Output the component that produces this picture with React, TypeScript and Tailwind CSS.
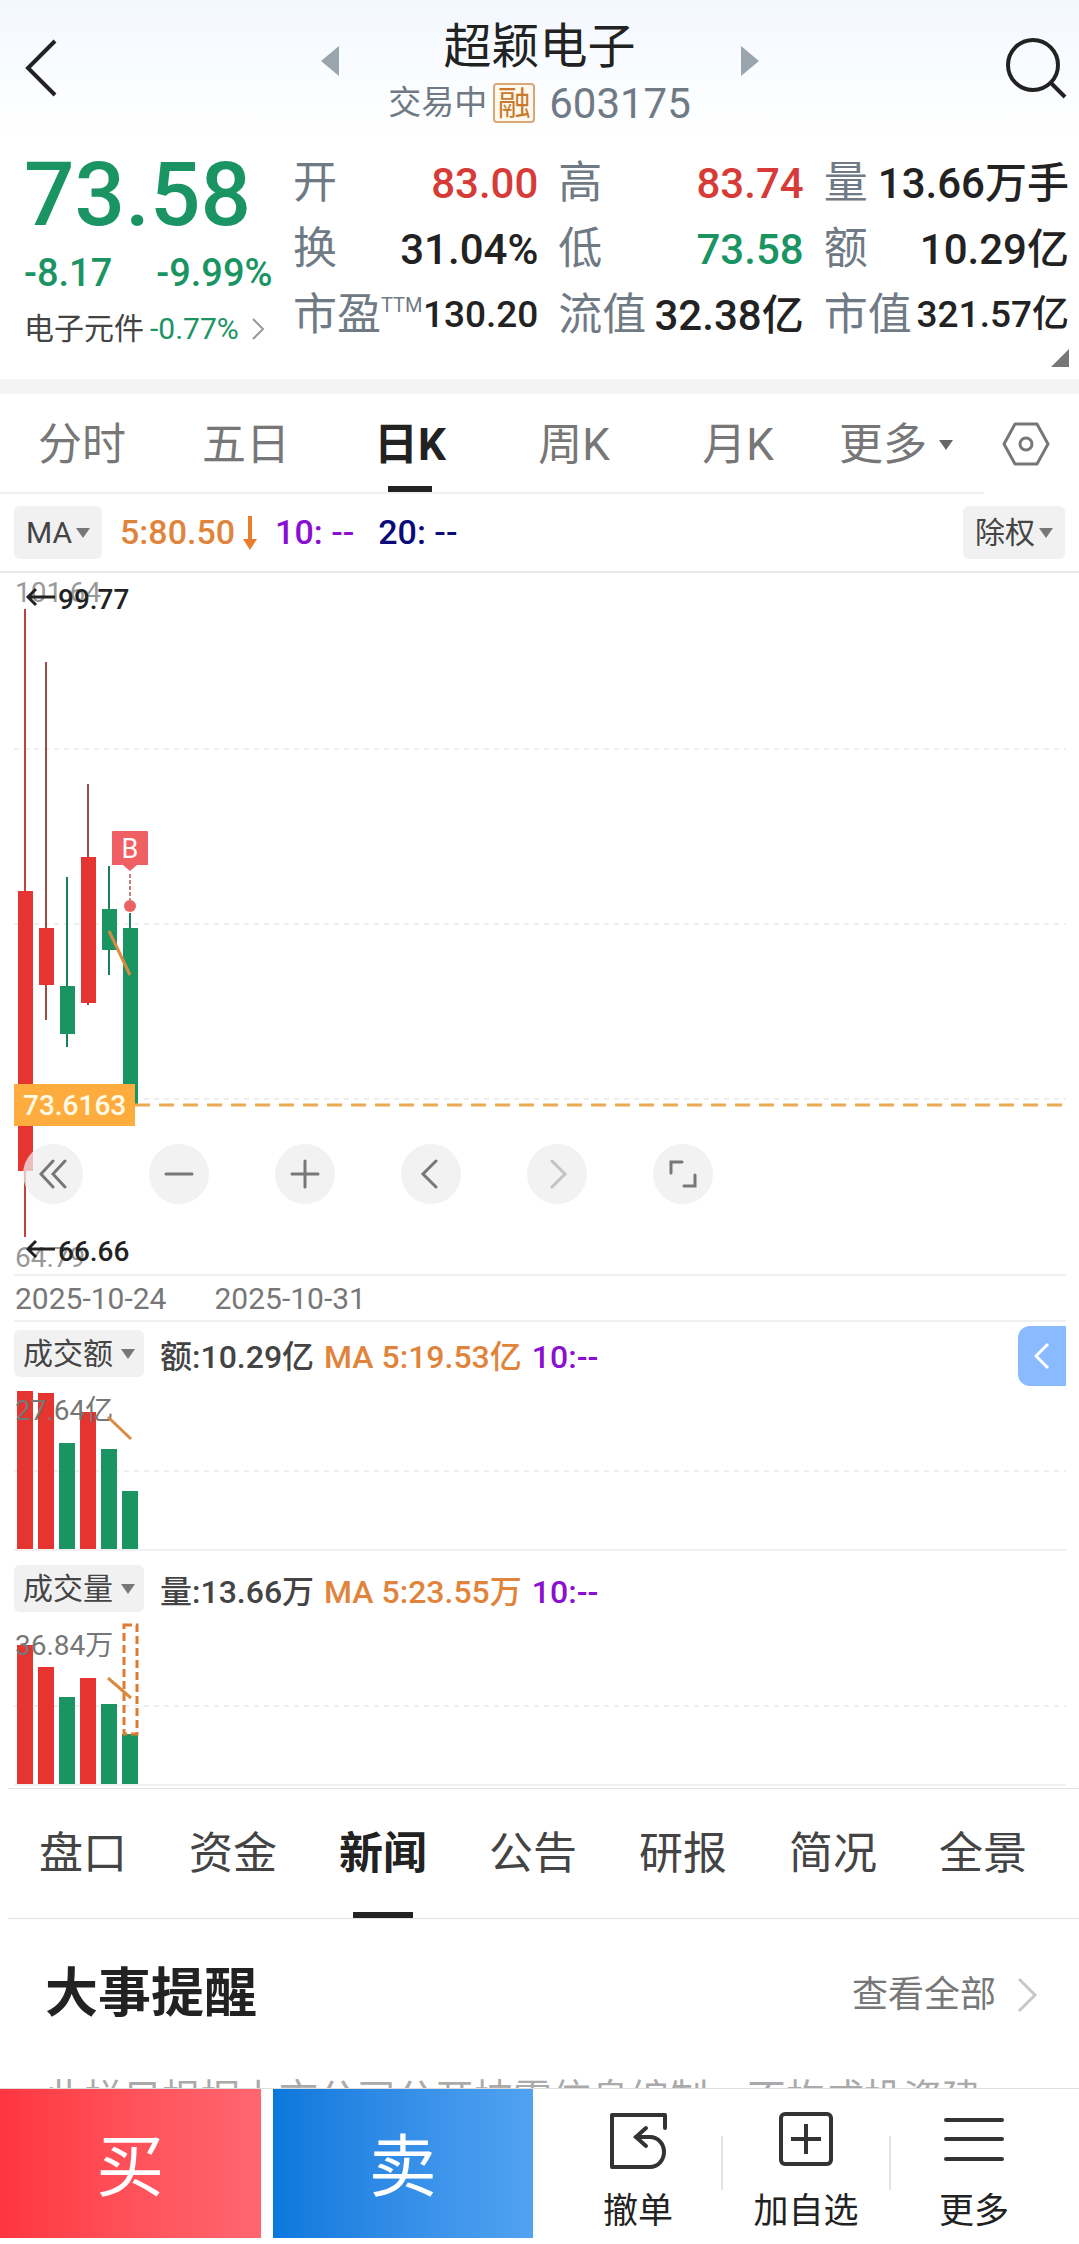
import type { ReactNode } from "react";

const RED = "#e63431";
const GREEN = "#1b9464";

const quotes = [
  { label: "开", value: "83.00", tone: "text-[#d63b38]" },
  { label: "高", value: "83.74", tone: "text-[#d63b38]" },
  { label: "量", value: "13.66万手", tone: "text-[#222222]" },
  { label: "换", value: "31.04%", tone: "text-[#222222]" },
  { label: "低", value: "73.58", tone: "text-[#1b9464]" },
  { label: "额", value: "10.29亿", tone: "text-[#222222]" },
  { label: "市盈", sup: "TTM", value: "130.20", tone: "text-[#222222]", small: true },
  { label: "流值", value: "32.38亿", tone: "text-[#222222]" },
  { label: "市值", value: "321.57亿", tone: "text-[#222222]", small: true },
];

const periods = ["分时", "五日", "日K", "周K", "月K"];
const sections = ["盘口", "资金", "新闻", "公告", "研报", "简况", "全景"];

// y values are measured from the top edge of the price chart
const candles = [
  { x: 18, high: 36, top: 318, bottom: 598, low: 664, color: RED, wick: "#c4403e" },
  { x: 39, high: 89, top: 355, bottom: 412, low: 447, color: RED, wick: "#a04a46" },
  { x: 60, high: 304, top: 413, bottom: 461, low: 474, color: GREEN, wick: "#1b8058" },
  { x: 81, high: 211, top: 284, bottom: 430, low: 432, color: RED, wick: "#a04a46" },
  { x: 102, high: 293, top: 336, bottom: 377, low: 402, color: GREEN, wick: "#1b8058" },
  { x: 123, high: 340, top: 355, bottom: 531, low: 531, color: GREEN, wick: "#1b8058" },
];

const amountBars = [
  { height: 158, color: RED },
  { height: 156, color: RED },
  { height: 106, color: GREEN },
  { height: 137, color: RED },
  { height: 100, color: GREEN },
  { height: 58, color: GREEN },
];

const volumeBars = [
  { height: 139, color: RED },
  { height: 117, color: RED },
  { height: 87, color: GREEN },
  { height: 106, color: RED },
  { height: 80, color: GREEN },
  { height: 50, color: GREEN },
];

function Caret({ className = "" }: { className?: string }) {
  return (
    <svg width="14" height="10" viewBox="0 0 14 10" className={className} aria-hidden="true">
      <path d="M0 0h14L7 10z" fill="currentColor" />
    </svg>
  );
}

function Header() {
  return (
    <header className="flex h-[136px] items-center justify-between bg-gradient-to-b from-[#f3f8ff] to-white px-3">
      <button aria-label="返回" className="flex h-16 w-14 items-center pl-3">
        <svg width="34" height="58" viewBox="0 0 34 58" fill="none" stroke="#222" strokeWidth="4">
          <path d="M31 2 4 29l27 27" />
        </svg>
      </button>

      <div className="flex items-start gap-[50px] pt-3">
        <button aria-label="上一只" className="pt-7">
          <svg width="18" height="30" viewBox="0 0 18 30" fill="#9aa4ad">
            <path d="M18 0v30L0 15z" />
          </svg>
        </button>
        <div className="flex w-[302px] flex-col items-center">
          <h1 className="text-[48px] leading-[58px] whitespace-nowrap text-[#222222]">超颖电子</h1>
          <div className="flex h-[54px] items-center gap-[6px] text-[#6f7a85]">
            <span className="text-[33px] whitespace-nowrap">交易中</span>
            <span className="flex h-10 w-[42px] items-center justify-center rounded-sm border-2 border-[#d9a877] bg-[#fff8ef] text-[33px] leading-none text-[#c87a2a]">
              融
            </span>
            <span className="pl-2 text-[42px]">603175</span>
          </div>
        </div>
        <button aria-label="下一只" className="pt-7">
          <svg width="18" height="30" viewBox="0 0 18 30" fill="#9aa4ad">
            <path d="M0 0v30l18-15z" />
          </svg>
        </button>
      </div>

      <button aria-label="搜索" className="flex h-16 w-14 items-center justify-end">
        <svg width="62" height="62" viewBox="0 0 62 62" fill="none" stroke="#222" strokeWidth="4" className="shrink-0">
          <circle cx="28" cy="28" r="25" />
          <path d="M45 45l15 15" />
        </svg>
      </button>
    </header>
  );
}

function QuoteSummary() {
  return (
    <section className="flex h-[243px] pr-[10px] pl-6">
      <div className="w-[269px] shrink-0 text-[#1b9464]">
        <p className="pt-[14px] text-[89px] leading-[90px] font-medium">73.58</p>
        <div className="flex gap-11 pt-3 text-[38px] leading-[42px] font-medium">
          <span>-8.17</span>
          <span>-9.99%</span>
        </div>
        <a href="#sector" className="flex items-center pt-[18px] text-[30px] leading-[34px]">
          <span className="pr-[6px] text-[#444444]">电子元件</span>
          -0.77%
          <svg width="14" height="22" viewBox="0 0 14 22" fill="none" stroke="#999" strokeWidth="2" className="ml-3">
            <path d="M2 1l10 10L2 21" />
          </svg>
        </a>
      </div>

      <div className="relative min-w-0 flex-1">
        <dl className="grid grid-cols-3 gap-x-5 pt-[14px]">
          {quotes.map((quote) => (
            <div key={quote.label} className="flex h-[66px] items-center justify-between whitespace-nowrap">
              <dt className="flex items-center text-[44px] text-[#6f7a85]">
                {quote.label}
                {quote.sup && <span className="mb-5 text-[20px] leading-none">{quote.sup}</span>}
              </dt>
              <dd
                className={`font-medium ${quote.tone} ${quote.small ? "text-[37px]" : "text-[42px]"}`}
              >
                {quote.value}
              </dd>
            </div>
          ))}
        </dl>
        <svg width="18" height="18" viewBox="0 0 18 18" className="absolute right-0 bottom-3">
          <path d="M18 0v18H0z" fill="#777" />
        </svg>
      </div>
    </section>
  );
}

function PeriodTabs() {
  return (
    <nav className="flex h-[100px] items-stretch text-[44px] text-[#777777]">
      <div className="flex flex-1 border-b-2 border-[#f1f1f1]">
        {periods.map((name) => (
          <button
            key={name}
            className={
              name === "日K"
                ? "relative w-1/6 pt-1 font-bold text-[#222222]"
                : "relative w-1/6 pt-1"
            }
          >
            {name}
            {name === "日K" && (
              <span className="absolute bottom-0 left-1/2 h-[6px] w-11 -translate-x-1/2 bg-[#222222]" />
            )}
          </button>
        ))}
        <button className="flex w-1/6 items-center justify-center gap-3 pt-1 pr-3">
          更多
          <Caret className="text-[#666666]" />
        </button>
      </div>
      <button aria-label="设置" className="flex w-[95px] items-center justify-center pr-3">
        <svg width="48" height="44" viewBox="0 0 48 44" fill="none" stroke="#777" strokeWidth="3">
          <path d="M13 2h22l11 20-11 20H13L2 22z" strokeLinejoin="round" />
          <circle cx="24" cy="22" r="6" />
        </svg>
      </button>
    </nav>
  );
}

function IndicatorRow() {
  return (
    <div className="flex h-[79px] items-center border-b-2 border-[#e9e9e9] px-[14px] text-[34px] font-medium">
      <button className="flex h-[53px] items-center gap-1 rounded-md bg-[#f1f1f1] px-3 text-[30px] font-normal text-[#444444]">
        MA
        <Caret className="text-[#777777]" />
      </button>
      <span className="pl-[18px] text-[#e0843c]">5:80.50</span>
      <svg width="14" height="34" viewBox="0 0 14 34" className="mr-[18px] ml-2" aria-hidden="true">
        <path d="M7 0v28" stroke="#e87f2e" strokeWidth="4" />
        <path d="M0 23h14L7 34z" fill="#e87f2e" />
      </svg>
      <span className="text-[#8a0fd0]">10: --</span>
      <span className="pl-6 text-[#0a0a78]">20: --</span>
      <button className="ml-auto flex h-[53px] items-center gap-1 rounded-md bg-[#f1f1f1] px-3 text-[30px] font-normal text-[#444444]">
        除权
        <Caret className="text-[#777777]" />
      </button>
    </div>
  );
}

function GridLine({ y }: { y: number }) {
  return <line x1="14" x2="100%" y1={y} y2={y} stroke="#eeeeee" strokeWidth="2" strokeDasharray="5 5" />;
}

function RoundButton({ label, faded, children }: { label: string; faded?: boolean; children: ReactNode }) {
  return (
    <button aria-label={label} className="flex size-[60px] items-center justify-center rounded-full bg-[#eeeeee]/75">
      <svg
        width="30"
        height="30"
        viewBox="0 0 30 30"
        fill="none"
        stroke={faded ? "#c4c4c4" : "#777777"}
        strokeWidth="3"
        strokeLinecap="round"
      >
        {children}
      </svg>
    </button>
  );
}

function PriceChart() {
  return (
    <section className="relative pr-[13px]">
      <svg width="100%" height="701" className="block">
        <GridLine y={176} />
        <GridLine y={351} />
        <GridLine y={526} />

        <text x="15" y="29" fontSize="28" fill="#999999">101.64</text>
        <text x="15" y="694" fontSize="28" fill="#999999">64.79</text>

        {candles.map((c) => (
          <g key={c.x}>
            <line x1={c.x + 7} x2={c.x + 7} y1={c.high} y2={c.low} stroke={c.wick} strokeWidth="2" />
            <rect x={c.x} y={c.top} width="15" height={c.bottom - c.top} fill={c.color} />
          </g>
        ))}
        <path d="M109 358l21 44" stroke="#d98b3f" strokeWidth="3" />

        <g fill="none" stroke="#222222" strokeWidth="3">
          <path d="M55 24H28M36 16l-8 8 8 8" />
          <path d="M55 676H28M36 668l-8 8 8 8" />
        </g>
        <g fontSize="28" fontWeight="500" fill="#222222">
          <text x="58" y="36">99.77</text>
          <text x="58" y="688">66.66</text>
        </g>

        <path d="M130 301v26" stroke="#c97f80" strokeWidth="2" strokeDasharray="4 2" />
        <circle cx="130" cy="333" r="6" fill="#ea6264" />
        <path d="M113 258h34a1 1 0 0 1 1 1v33h-11l-7 6-7-6h-11v-33a1 1 0 0 1 1-1z" fill="#ee6063" />
        <text x="130" y="285" fontSize="27" fill="#ffffff" textAnchor="middle">
          B
        </text>

        <line x1="135" x2="100%" y1="532" y2="532" stroke="#ebaa52" strokeWidth="3" strokeDasharray="15 9" />
        <rect x="14" y="511" width="121" height="42" fill="#ffac3e" />
        <text x="23" y="542" fontSize="28" fontWeight="500" fill="#fffbe8">73.6163</text>
      </svg>

      <div className="absolute bottom-[70px] left-[23px] flex gap-[66px]">
        <RoundButton label="最早">
          <path d="M15 2 3 15l12 13M27 2 15 15l12 13" />
        </RoundButton>
        <RoundButton label="缩小">
          <path d="M2 15h26" />
        </RoundButton>
        <RoundButton label="放大">
          <path d="M2 15h26M15 2v26" />
        </RoundButton>
        <RoundButton label="向左">
          <path d="M20 2 7 15l13 13" />
        </RoundButton>
        <RoundButton label="向右" faded>
          <path d="M10 2l13 13-13 13" />
        </RoundButton>
        <RoundButton label="全屏">
          <path d="M14 3H3v11M16 27h11V16" />
        </RoundButton>
      </div>
    </section>
  );
}

interface BarPanelProps {
  name: string;
  current: string;
  average: string;
  peak: string;
  bars: { height: number; color: string }[];
  action?: ReactNode;
  children: ReactNode;
}

function BarPanel({ name, current, average, peak, bars, action, children }: BarPanelProps) {
  return (
    <section className="border-b-2 border-[#f0f0f0]">
      <div className="flex h-[62px] items-start pt-2 text-[32px] font-medium">
        <button className="flex h-[47px] items-center gap-2 rounded-md bg-[#f1f1f1] px-[9px] text-[30px] font-normal text-[#444444]">
          {name}
          <Caret className="text-[#777777]" />
        </button>
        <p className="flex h-[54px] items-center gap-[10px] pl-4 whitespace-nowrap">
          <span className="text-[#444444]">{current}</span>
          <span className="text-[#e0843c]">MA 5:{average}</span>
          <span className="text-[#8a0fd0]">10:--</span>
        </p>
        {action}
      </div>
      <svg width="100%" height="165" className="block">
        <line x1="0" x2="100%" y1="87" y2="87" stroke="#eeeeee" strokeWidth="2" strokeDasharray="5 5" />
        {bars.map((bar, i) => (
          <rect key={i} x={3 + i * 21} y={165 - bar.height} width="16" height={bar.height} fill={bar.color} />
        ))}
        <text x="1" y="36" fontSize="28" fill="#777777">{peak}</text>
        {children}
      </svg>
    </section>
  );
}

function SectionTabs() {
  return (
    <nav className="mt-[2px] ml-2 flex h-[131px] border-t border-b border-[#e3e3e3] pr-[21px] text-[44px] text-[#444444]">
      {sections.map((name) => (
        <button
          key={name}
          className={name === "新闻" ? "relative flex-1 font-bold text-[#222222]" : "relative flex-1"}
        >
          {name}
          {name === "新闻" && (
            <span className="absolute bottom-0 left-1/2 h-[6px] w-[60px] -translate-x-1/2 bg-[#222222]" />
          )}
        </button>
      ))}
    </nav>
  );
}

function NewsReminder() {
  return (
    <section className="px-[45px]">
      <div className="flex h-[152px] items-center justify-between">
        <h2 className="text-[53px] font-bold text-[#222222]">大事提醒</h2>
        <a href="#all" className="-mr-1 flex items-center gap-5 text-[36px] text-[#777777]">
          查看全部
          <svg width="22" height="36" viewBox="0 0 22 36" fill="none" stroke="#c8c8c8" strokeWidth="3">
            <path d="M3 2l16 16L3 34" />
          </svg>
        </a>
      </div>
      <p className="text-[39px] leading-[56px] whitespace-nowrap text-[#aaaaaa]">
        此栏目根据上市公司公开披露信息编制，不构成投资建
      </p>
    </section>
  );
}

function TradeBar() {
  return (
    <footer className="flex h-[156px] shrink-0 border-t border-[#dddddd] bg-white pb-[6px]">
      <div className="flex w-[533px] gap-3 text-[68px] text-white">
        <button className="flex-1 bg-gradient-to-r from-[#ff3540] to-[#ff6670] pt-2">买</button>
        <button className="flex-1 bg-gradient-to-r from-[#0878dd] to-[#51a3f1] pt-2">卖</button>
      </div>
      <div className="flex flex-1 px-[22px] text-[35px] leading-[42px] text-[#222222]">
        <button className="flex flex-1 flex-col items-center justify-between pt-[22px] pb-[5px]">
          <svg width="60" height="60" viewBox="0 0 60 60" fill="none" stroke="#333" strokeWidth="4" strokeLinecap="round">
            <path d="M57 17V4H4v52h38a14 15 0 0 0 0-30H28" strokeLinejoin="round" />
            <path d="M38 17 28 26l10 9" />
          </svg>
          撤单
        </button>
        <div className="mt-[47px] h-[54px] w-[2px] bg-[#e2e2e2]" />
        <button className="flex flex-1 flex-col items-center justify-between pt-[22px] pb-[5px]">
          <svg width="56" height="56" viewBox="0 0 56 56" fill="none" stroke="#333" strokeWidth="4">
            <rect x="3" y="3" width="50" height="50" rx="4" />
            <path d="M13 28h30M28 13v30" />
          </svg>
          加自选
        </button>
        <div className="mt-[47px] h-[54px] w-[2px] bg-[#e2e2e2]" />
        <button className="flex flex-1 flex-col items-center justify-between pt-[22px] pb-[5px]">
          <svg width="60" height="56" viewBox="0 0 60 56" fill="none" stroke="#333" strokeWidth="4" strokeLinecap="round">
            <path d="M2 9h56M2 28h56M2 48h56" />
          </svg>
          更多
        </button>
      </div>
    </footer>
  );
}

export default function App() {
  return (
    <div className="flex h-screen flex-col bg-white font-[Roboto,'Noto_Sans_CJK_SC',sans-serif]">
      <main className="min-h-0 flex-1 overflow-hidden">
        <Header />
        <QuoteSummary />
        <div className="h-[15px] bg-[#f4f4f4]" />
        <PeriodTabs />
        <IndicatorRow />
        <PriceChart />
        <div className="mr-[13px] ml-[14px] flex h-[48px] items-center gap-12 border-t-2 border-b-2 border-[#f0f0f0] pl-px text-[30px] text-[#777777]">
          <span>2025-10-24</span>
          <span>2025-10-31</span>
        </div>
        <div className="mr-[13px] ml-[14px] flex flex-col gap-[6px]">
          <BarPanel
            name="成交额"
            current="额:10.29亿"
            average="19.53亿"
            peak="27.64亿"
            bars={amountBars}
            action={
              <button
                aria-label="展开"
                className="-mt-1 ml-auto flex h-[60px] w-12 items-center justify-center rounded-l-xl bg-[#8abaff]"
              >
                <svg width="16" height="28" viewBox="0 0 16 28" fill="none" stroke="#fff" strokeWidth="3">
                  <path d="M14 2 2 14l12 12" />
                </svg>
              </button>
            }
          >
            <path d="M94 33l23 22" stroke="#d98b3f" strokeWidth="3" />
          </BarPanel>
          <BarPanel name="成交量" current="量:13.66万" average="23.55万" peak="36.84万" bars={volumeBars}>
            <rect x="110" y="6" width="13" height="109" fill="none" stroke="#dd7b33" strokeWidth="3" strokeDasharray="8 4" />
            <path d="M94 59l23 20" stroke="#d98b3f" strokeWidth="3" />
          </BarPanel>
        </div>
        <SectionTabs />
        <NewsReminder />
      </main>
      <TradeBar />
    </div>
  );
}
